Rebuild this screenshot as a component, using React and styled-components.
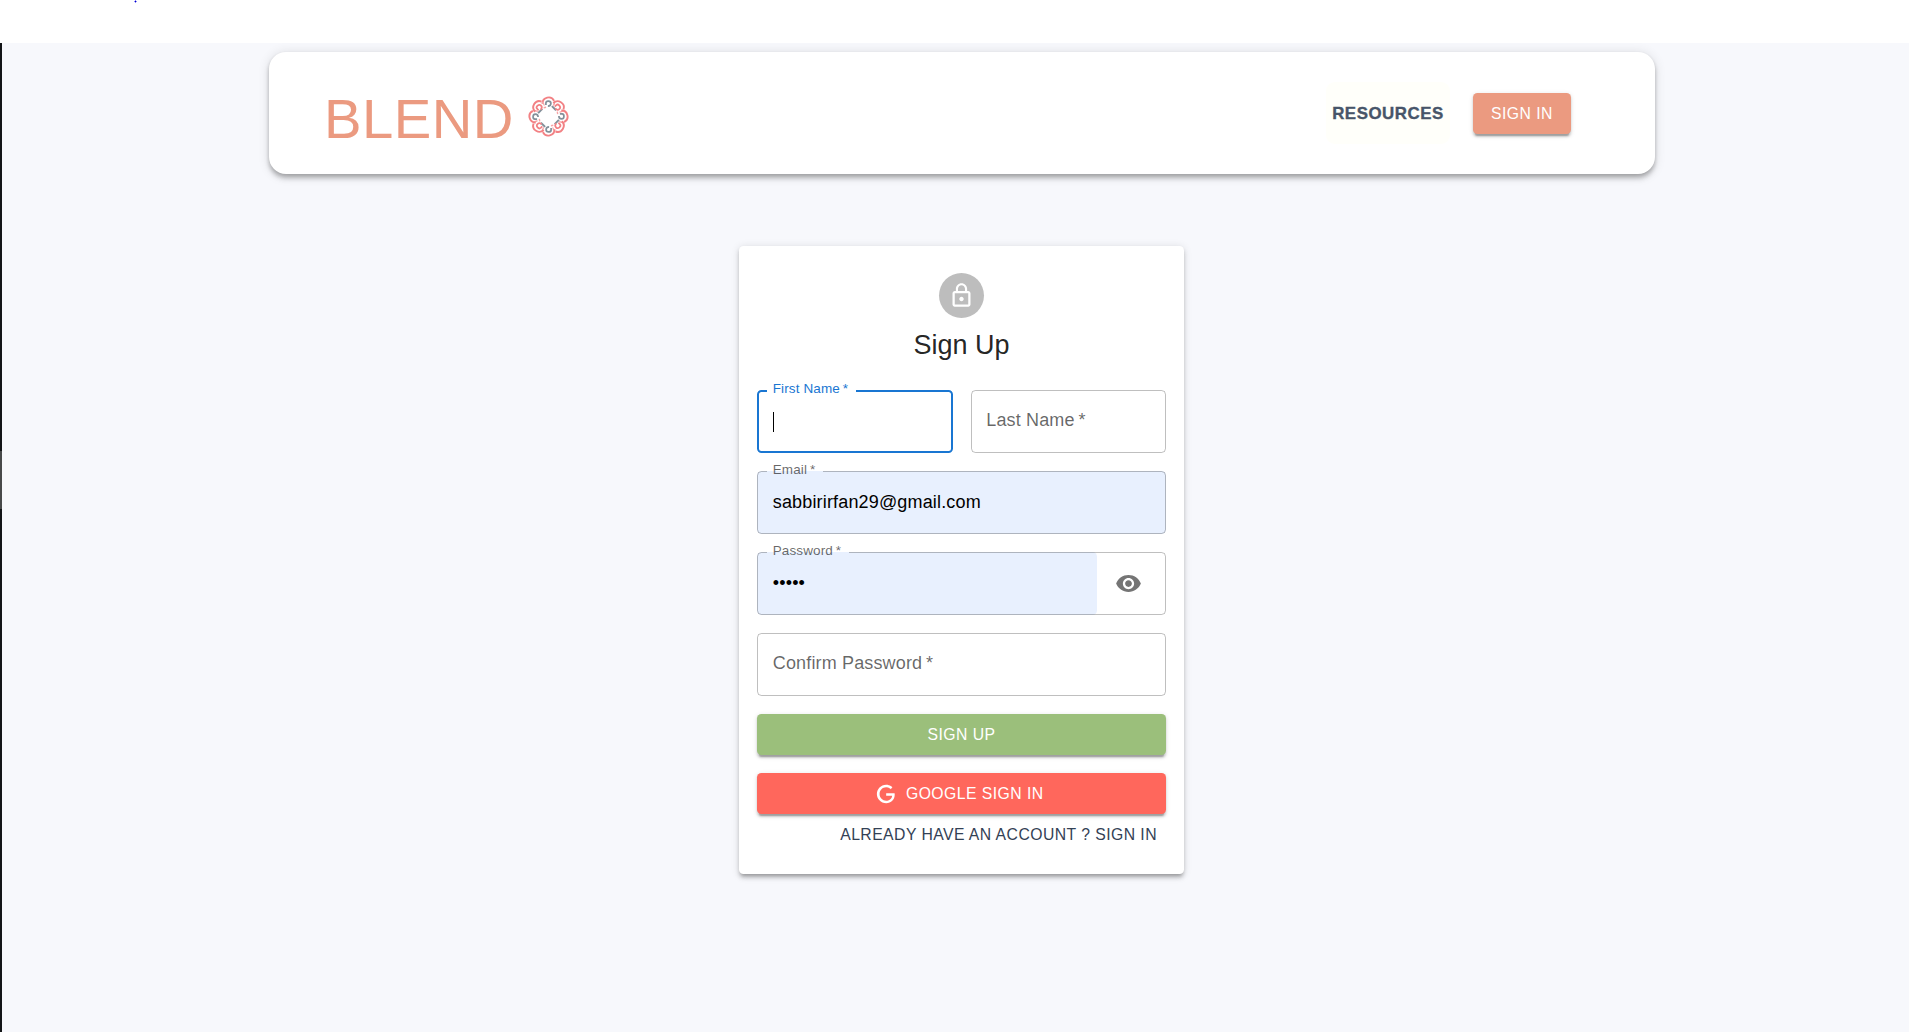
import React from "react";
import styled, { createGlobalStyle, css } from "styled-components";

const Global = createGlobalStyle`
  *, *::before, *::after { box-sizing: border-box; }
  html, body { margin: 0; padding: 0; }
  body {
    font-family: "Liberation Sans", Arial, Helvetica, sans-serif;
    background: #fff;
    overflow: hidden;
  }
`;

const Page = styled.div`
  display: flex;
  flex-direction: column;
  height: 100vh;
`;

const TopStrip = styled.div`
  flex: none;
  height: 43px;
  padding-left: 134px;
  background: #fff;
`;

const Speck = styled.svg`
  display: block;
  width: 3px;
  height: 3px;
`;

const Body = styled.div`
  flex: 1;
  display: flex;
  min-height: 0;
  background: #f7f8fc;
`;

const Rail = styled.div`
  flex: none;
  width: 2px;
  padding-top: 408px;
  background: #131517;
`;

const RailThumb = styled.div`
  height: 58px;
  background: #48494a;
`;

const Main = styled.main`
  flex: 1;
  display: flex;
  flex-direction: column;
  align-items: center;
  padding: 9px 0 0 12px;
`;

const AppBar = styled.header`
  display: flex;
  align-items: center;
  justify-content: space-between;
  width: 1386px;
  height: 122px;
  margin-left: 1px;
  padding: 0 84px 0 55px;
  border-radius: 17px;
  background: #fff;
  box-shadow: 0 2.25px 4.5px -1.1px rgba(0, 0, 0, 0.2),
    0 4.5px 5.6px 0 rgba(0, 0, 0, 0.14), 0 1.1px 11.25px 0 rgba(0, 0, 0, 0.12);
`;

const Brand = styled.div`
  display: flex;
  align-items: center;
  gap: 14px;
  padding-top: 11px;
`;

const BrandName = styled.span`
  color: #eb9a80;
  font-size: 56.25px;
  line-height: 64px;
  letter-spacing: 0.45px;
`;

const Emblem = styled.svg`
  display: block;
  width: 41px;
  height: 41px;
  margin-top: -4px;
`;

const Nav = styled.nav`
  display: flex;
  align-items: center;
  gap: 23px;
`;

const NavLink = styled.a`
  display: flex;
  justify-content: center;
  width: 124px;
  height: 62px;
  padding-top: 22px;
  border-radius: 9px;
  background: #fffffa;
  color: #475569;
  font-size: 16.875px;
  font-weight: 700;
  line-height: 20px;
  letter-spacing: 0.55px;
  -webkit-text-stroke: 0.35px #475569;
`;

const buttonText = css`
  font-family: inherit;
  font-size: 15.75px;
  line-height: 27.5px;
  letter-spacing: 0.45px;
  text-transform: uppercase;
`;

const Button = styled.button`
  ${buttonText}
  display: flex;
  align-items: center;
  justify-content: center;
  gap: 9px;
  width: ${(p) => p.$width || "100%"};
  height: 41px;
  margin: 0;
  padding: 1px 0 0;
  border: 0;
  border-radius: 4.5px;
  background: ${(p) => p.$color};
  color: #fff;
  box-shadow: 0 3.4px 1.1px -2.25px rgba(0, 0, 0, 0.2),
    0 2.25px 2.25px 0 rgba(0, 0, 0, 0.14), 0 1.1px 5.6px 0 rgba(0, 0, 0, 0.12);
`;

const Card = styled.section`
  display: flex;
  flex-direction: column;
  align-items: center;
  width: 445px;
  height: 628px;
  margin-top: 72px;
  padding: 27px 18px 18px;
  border-radius: 4.5px;
  background: #fff;
  box-shadow: 0 3.4px 3.4px -2.25px rgba(0, 0, 0, 0.2),
    0 3.4px 4.5px 0 rgba(0, 0, 0, 0.14), 0 1.1px 9px 0 rgba(0, 0, 0, 0.12);
`;

const Avatar = styled.div`
  display: flex;
  align-items: center;
  justify-content: center;
  width: 45px;
  height: 45px;
  border-radius: 50%;
  background: #bdbdbd;
`;

const Icon = styled.svg`
  display: block;
  width: ${(p) => p.$size}px;
  height: ${(p) => p.$size}px;
  margin-left: ${(p) => p.$pull || 0}px;
  fill: ${(p) => p.$color || "#fff"};
`;

const Title = styled.h1`
  margin: 9px 0 27px;
  color: rgba(0, 0, 0, 0.87);
  font-size: 27px;
  font-weight: 400;
  line-height: 36px;
`;

const Form = styled.form`
  display: flex;
  flex-direction: column;
  gap: 18px;
  width: 100%;
`;

const Row = styled.div`
  display: grid;
  grid-template-columns: 1fr 1fr;
  gap: 18px;
`;

const FieldBox = styled.div`
  position: relative;
  display: flex;
  align-items: center;
  height: 63px;
  padding-right: ${(p) => (p.$end ? "15px" : 0)};
`;

const Value = styled.div`
  flex: 1;
  display: flex;
  align-items: center;
  height: 63px;
  padding: 0 15.75px 1px;
  border-radius: 4.5px;
  background: ${(p) => (p.$filled ? "#e8f0fe" : "transparent")};
  color: #000;
  font-size: 18px;
  letter-spacing: 0.16px;
`;

const Caret = styled.span`
  width: 1px;
  height: 20px;
  margin-top: 1px;
  background: #000;
`;

const Outline = styled.fieldset`
  position: absolute;
  inset: ${(p) => (p.$notched ? "-5.6px" : 0)} 0 0;
  min-width: 0;
  margin: 0;
  padding: 0 ${(p) => (p.$focused ? 8 : 9)}px;
  border: ${(p) => (p.$focused ? "2px solid #1976d2" : "1px solid rgba(0, 0, 0, 0.25)")};
  border-radius: 4.5px;
  pointer-events: none;
`;

const Notch = styled.legend`
  height: 12.4px;
  padding: 0 6.5px 0 5.6px;
  font-size: 13.5px;
  letter-spacing: 0.13px;
  visibility: hidden;
`;

const Label = styled.label`
  position: absolute;
  left: 15.75px;
  top: ${(p) => (p.$floating ? "-11px" : "17px")};
  color: ${(p) => (p.$focused ? "#1976d2" : "rgba(0, 0, 0, 0.6)")};
  font-size: ${(p) => (p.$floating ? 13.5 : 18)}px;
  line-height: ${(p) => (p.$floating ? 19.4 : 26)}px;
  letter-spacing: 0.0085em;
  white-space: nowrap;
`;

const Asterisk = styled.span`
  margin-left: -0.08em;
`;

const EyeButton = styled.span`
  display: flex;
  margin-left: 9px;
  padding: 9px;
`;

const Actions = styled.div`
  display: flex;
  flex-direction: column;
  align-items: flex-end;
`;

const TextLink = styled.a`
  ${buttonText}
  height: 41px;
  padding: 7px 9px 6px;
  color: #334155;
`;

function Field({ label, focused, filled, value, end }) {
  const floating = focused || filled;
  return (
    <FieldBox $end={!!end}>
      <Value $filled={filled}>{focused ? <Caret /> : value}</Value>
      {end}
      <Outline $focused={focused} $notched={floating}>
        {floating && <Notch>{label} *</Notch>}
      </Outline>
      <Label $floating={floating} $focused={focused}>
        {label} <Asterisk>*</Asterisk>
      </Label>
    </FieldBox>
  );
}

const petals = [0, 45, 90, 135, 180, 225, 270, 315];

function FlowerEmblem() {
  return (
    <Emblem viewBox="-20.5 -20.5 41 41" fill="none">
      {petals.map((a, i) => (
        <g key={a} transform={`rotate(${a})`}>
          <path d="M-6 -12.8A6.1 6.1 0 0 1 5.6 -15.6" stroke="#f28184" strokeWidth="1.9" />
          <path d="M5.6 -15.6Q6.6 -13 4.8 -10.8" stroke="#f6a5a7" strokeWidth="1.3" />
          <path
            d="M-2.6 -11.4V-13.6C-2.4 -16.2 2.4 -16 2.4 -13.2C2.4 -11.2 1.2 -10.4 -.6 -10.4"
            stroke={i % 2 ? "#f28184" : "#83909a"}
            strokeWidth="1.7"
          />
          {i % 2 === 0 && (
            <path d="M3.4 -10.4L7.6 -6.2" stroke="#83909a" strokeWidth="2" />
          )}
          {i % 2 === 1 && (
            <path d="M2.8 -9.6L4.8 -8.2" stroke="#f6a5a7" strokeWidth="1.4" />
          )}
        </g>
      ))}
    </Emblem>
  );
}

export default function App() {
  return (
    <Page>
      <Global />
      <TopStrip>
        <Speck viewBox="0 0 3 3">
          <path d="M0 1h3v1H0zM1 0h1v3H1z" fill="#8c8cf5" />
          <path d="M1 1h1v1H1z" fill="#0000c8" />
        </Speck>
      </TopStrip>
      <Body>
        <Rail><RailThumb /></Rail>
        <Main>
          <AppBar>
            <Brand>
              <BrandName>BLEND</BrandName>
              <FlowerEmblem />
            </Brand>
            <Nav>
              <NavLink>RESOURCES</NavLink>
              <Button $width="98px" $color="#eb9a80">Sign In</Button>
            </Nav>
          </AppBar>
          <Card>
            <Avatar>
              <Icon $size={27} viewBox="0 0 24 24">
                <path d="M12 17c1.1 0 2-.9 2-2s-.9-2-2-2-2 .9-2 2 .9 2 2 2zm6-9h-1V6c0-2.76-2.24-5-5-5S7 3.24 7 6v2H6c-1.1 0-2 .9-2 2v10c0 1.1.9 2 2 2h12c1.1 0 2-.9 2-2V10c0-1.1-.9-2-2-2zM8.9 6c0-1.71 1.39-3.1 3.1-3.1s3.1 1.39 3.1 3.1v2H8.9V6zM18 20H6V10h12v10z" />
              </Icon>
            </Avatar>
            <Title>Sign Up</Title>
            <Form>
              <Row>
                <Field label="First Name" focused />
                <Field label="Last Name" />
              </Row>
              <Field label="Email" filled value="sabbirirfan29@gmail.com" />
              <Field
                label="Password"
                filled
                value="•••••"
                end={
                  <EyeButton>
                    <Icon $size={27} $color="#757575" viewBox="0 0 24 24">
                      <path d="M12 4.5C7 4.5 2.73 7.61 1 12c1.73 4.39 6 7.5 11 7.5s9.27-3.11 11-7.5c-1.73-4.39-6-7.5-11-7.5zM12 17c-2.76 0-5-2.24-5-5s2.24-5 5-5 5 2.24 5 5-2.24 5-5 5zm0-8c-1.66 0-3 1.34-3 3s1.34 3 3 3 3-1.34 3-3-1.34-3-3-3z" />
                    </Icon>
                  </EyeButton>
                }
              />
              <Field label="Confirm Password" />
              <Button type="button" $color="#9bbf7b">Sign Up</Button>
              <Actions>
                <Button type="button" $color="#ff675c">
                  <Icon $size={22} $pull={-4.5} viewBox="0 0 24 24">
                    <path d="M21.35 11.1H12.18V13.83H18.69C18.36 17.64 15.19 19.27 12.19 19.27C8.36 19.27 5 16.25 5 12C5 7.9 8.2 4.73 12.2 4.73C15.29 4.73 17.1 6.7 17.1 6.7L19 4.72C19 4.72 16.56 2 12.1 2C6.42 2 2.03 6.8 2.03 12C2.03 17.05 6.16 22 12.25 22C17.6 22 21.5 18.33 21.5 12.91C21.5 11.76 21.35 11.1 21.35 11.1V11.1Z" />
                  </Icon>
                  Google Sign In
                </Button>
                <TextLink>Already have an account ? Sign In</TextLink>
              </Actions>
            </Form>
          </Card>
        </Main>
      </Body>
    </Page>
  );
}
